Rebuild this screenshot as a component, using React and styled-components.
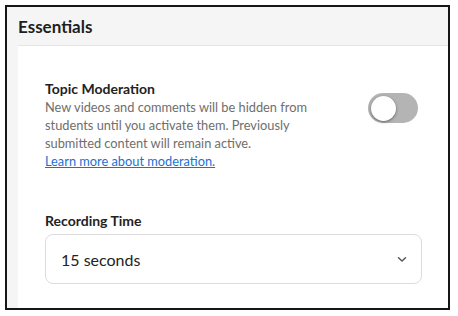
import React from "react";
import styled, { createGlobalStyle } from "styled-components";

const Global = createGlobalStyle`
  html, body { margin: 0; padding: 0; background: #ffffff; }
  body { padding: 5px; font-family: Lato, "Open Sans", "Liberation Sans", sans-serif; }
  * { box-sizing: border-box; }
`;

const Frame = styled.div`
  width: 445px;
  height: 305px;
  border: 2px solid #161616;
  background: #f5f5f5;
  padding-left: 11px;
  display: flex;
  flex-direction: column;
  overflow: hidden;
`;

const Header = styled.div`
  height: 39px;
  display: flex;
  align-items: center;
  border-bottom: 1px solid #e4e4e4;
  font-size: 17px;
  font-weight: 700;
  color: #1e1e1e;
  padding-top: 1px;
`;

const Card = styled.div`
  flex: 1;
  background: #ffffff;
  padding: 34px 26px 0 27px;
  display: flex;
  flex-direction: column;
`;

const SettingRow = styled.div`
  display: flex;
  justify-content: space-between;
  align-items: flex-start;
`;

const Info = styled.div`
  display: flex;
  flex-direction: column;
`;

const Title = styled.div`
  font-size: 14px;
  line-height: 17px;
  font-weight: 700;
  color: #222222;
`;

const Desc = styled.div`
  font-size: 12.8px;
  line-height: 18px;
  color: #6e6e6e;
  margin-top: 1px;
`;

const Link = styled.a`
  font-size: 12.8px;
  line-height: 18px;
  color: #1c6fd3;
  text-decoration: underline;
  cursor: pointer;
`;

const Toggle = styled.div`
  margin-top: 13px;
  margin-right: 4px;
  width: 50px;
  height: 30px;
  border-radius: 15px;
  background: ${(p) => (p.$on ? "#1c6fd3" : "#b4b4b4")};
  padding: 2.5px;
  display: flex;
  justify-content: ${(p) => (p.$on ? "flex-end" : "flex-start")};
`;

const Knob = styled.div`
  width: 25px;
  height: 25px;
  border-radius: 50%;
  background: #ffffff;
  box-shadow: 0 1px 3px rgba(0, 0, 0, 0.45);
`;

const Field = styled.div`
  margin-top: 42px;
  display: flex;
  flex-direction: column;
`;

const Label = styled.div`
  font-size: 14px;
  line-height: 18px;
  font-weight: 700;
  color: #222222;
  margin-bottom: 4px;
`;

const Select = styled.div`
  height: 50px;
  border: 1px solid #dcdcdc;
  border-radius: 8px;
  display: flex;
  align-items: center;
  justify-content: space-between;
  padding: 0 14px 0 15px;
  font-size: 16px;
  color: #222222;
`;

const Chevron = () => (
  <svg width="10" height="7" viewBox="0 0 10 7" fill="none">
    <path d="M1.5 1.8 L5 5 L8.5 1.8" stroke="#555" strokeWidth="1.5" strokeLinecap="round" strokeLinejoin="round" />
  </svg>
);

export default function App() {
  return (
    <>
      <Global />
      <Frame>
        <Header>Essentials</Header>
        <Card>
          <SettingRow>
            <Info>
              <Title>Topic Moderation</Title>
              <Desc>
                New videos and comments will be hidden from
                <br />
                students until you activate them. Previously
                <br />
                submitted content will remain active.
              </Desc>
              <Link>Learn more about moderation.</Link>
            </Info>
            <Toggle $on={false}>
              <Knob />
            </Toggle>
          </SettingRow>
          <Field>
            <Label>Recording Time</Label>
            <Select>
              <span>15 seconds</span>
              <Chevron />
            </Select>
          </Field>
        </Card>
      </Frame>
    </>
  );
}
